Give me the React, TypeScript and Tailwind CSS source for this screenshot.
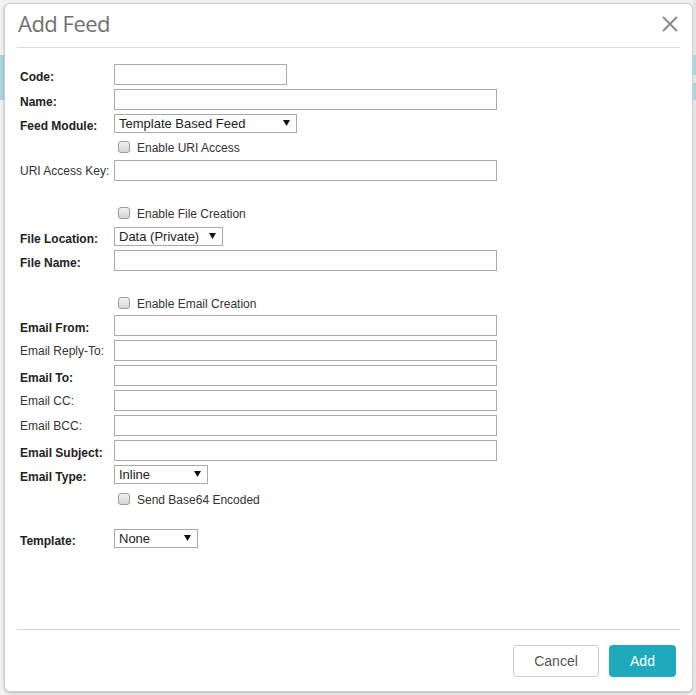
import type { ReactNode } from "react";

const LABEL_W = "w-[94px] shrink-0";

function Label({ text, bold }: { text: string; bold?: boolean }) {
  return (
    <span
      className={`${LABEL_W} text-[12px] leading-[14px] ${
        bold ? "font-bold text-[#222] pt-[5px]" : "text-[#333]"
      }`}
    >
      {text}
    </span>
  );
}

function TextInput({ w }: { w: string }) {
  return <span className={`${w} h-[21px] border border-[#a9a9a9] bg-white block`} />;
}

function Select({ w, value }: { w: string; value: string }) {
  return (
    <span
      className={`${w} h-[19px] border border-[#a9a9a9] bg-white flex items-center justify-between pl-[4px] pr-[6px] text-[13px] leading-[15px] text-[#222]`}
    >
      <span className="-mt-[1px]">{value}</span>
      <svg width="7" height="6" viewBox="0 0 7 6" className="-mt-[1px]">
        <polygon points="0,0 7,0 3.5,6" fill="#111" />
      </svg>
    </span>
  );
}

function Row({ label, bold, mt, children }: { label: string; bold?: boolean; mt: string; children: ReactNode }) {
  return (
    <div className={`flex items-center ${mt}`}>
      <Label text={label} bold={bold} />
      {children}
    </div>
  );
}

function Check({ text, mt }: { text: string; mt: string }) {
  return (
    <div className={`flex items-center h-[12px] pl-[98px] ${mt}`}>
      <span className="w-[12px] h-[12px] rounded-[3px] border border-[#9c9c9c] bg-gradient-to-b from-[#f2f2f2] to-[#d6d6d6] shrink-0" />
      <span className="ml-[7px] text-[12px] leading-[14px] text-[#333] mt-[2px]">{text}</span>
    </div>
  );
}

export default function App() {
  return (
    <div
      className="h-[695px] w-[696px] bg-[#f2f2f2] flex overflow-hidden"
      style={{ fontFamily: '"Liberation Sans", Arial, sans-serif' }}
    >
      {/* page behind the modal */}
      <div className="w-[4px] shrink-0 flex flex-col">
        <div className="mt-[55px] h-[45px] bg-[#a8d8df]" />
      </div>

      <div className="mt-[3px] w-[689px] h-[689px] shrink-0 bg-white border border-[#cfcfcf] rounded-[6px] shadow-[0_1px_3px_rgba(0,0,0,0.25)] flex flex-col">
        {/* header */}
        <div className="mx-[12px] pt-[3px] pb-[8px] border-b border-[#dadada] flex items-center justify-between">
          <h1
            className="pl-[1px] text-[22px] leading-[32px] tracking-[-0.5px] text-[#707070]"
            style={{ fontFamily: '"Open Sans", sans-serif' }}
          >
            Add Feed
          </h1>
          <svg width="18" height="18" viewBox="0 0 18 18" className="mr-[1px] mt-[1px]">
            <path d="M2 2 L16 16 M16 2 L2 16" stroke="#8a8a8a" strokeWidth="2" />
          </svg>
        </div>

        {/* form */}
        <div className="mx-[12px] pl-[3px] pt-[16px] flex flex-col">
          <Row label="Code:" bold mt="mt-0">
            <TextInput w="w-[173px]" />
          </Row>
          <Row label="Name:" bold mt="mt-[4px]">
            <TextInput w="w-[383px]" />
          </Row>
          <Row label="Feed Module:" bold mt="mt-[4px]">
            <Select w="w-[183px]" value="Template Based Feed" />
          </Row>
          <Check text="Enable URI Access" mt="mt-[8px]" />
          <Row label="URI Access Key:" mt="mt-[7px]">
            <TextInput w="w-[383px]" />
          </Row>

          <Check text="Enable File Creation" mt="mt-[26px]" />
          <Row label="File Location:" bold mt="mt-[8px]">
            <Select w="w-[109px]" value="Data (Private)" />
          </Row>
          <Row label="File Name:" bold mt="mt-[4px]">
            <TextInput w="w-[383px]" />
          </Row>

          <Check text="Enable Email Creation" mt="mt-[26px]" />
          <Row label="Email From:" bold mt="mt-[6px]">
            <TextInput w="w-[383px]" />
          </Row>
          <Row label="Email Reply-To:" mt="mt-[4px]">
            <TextInput w="w-[383px]" />
          </Row>
          <Row label="Email To:" bold mt="mt-[4px]">
            <TextInput w="w-[383px]" />
          </Row>
          <Row label="Email CC:" mt="mt-[4px]">
            <TextInput w="w-[383px]" />
          </Row>
          <Row label="Email BCC:" mt="mt-[4px]">
            <TextInput w="w-[383px]" />
          </Row>
          <Row label="Email Subject:" bold mt="mt-[4px]">
            <TextInput w="w-[383px]" />
          </Row>
          <Row label="Email Type:" bold mt="mt-[4px]">
            <Select w="w-[94px]" value="Inline" />
          </Row>
          <Check text="Send Base64 Encoded" mt="mt-[9px]" />

          <Row label="Template:" bold mt="mt-[24px]">
            <Select w="w-[84px]" value="None" />
          </Row>
        </div>

        {/* footer */}
        <div className="mt-auto mx-[12px] border-t border-[#dadada] pt-[15px] pb-[14px] pr-[4px] flex justify-end gap-[10px]">
          <button className="w-[86px] h-[32px] rounded-[4px] border border-[#cccccc] bg-white text-[14px] text-[#555]">
            Cancel
          </button>
          <button className="w-[67px] h-[32px] rounded-[4px] bg-[#1fa9bd] text-[14px] text-white">
            Add
          </button>
        </div>
      </div>

      <div className="flex-1 flex flex-col bg-[#e4e4e4]">
        <div className="mt-[55px] h-[20px] bg-[#a8d8df]" />
        <div className="mt-[8px] h-[17px] bg-[#a8d8df]" />
      </div>
    </div>
  );
}
